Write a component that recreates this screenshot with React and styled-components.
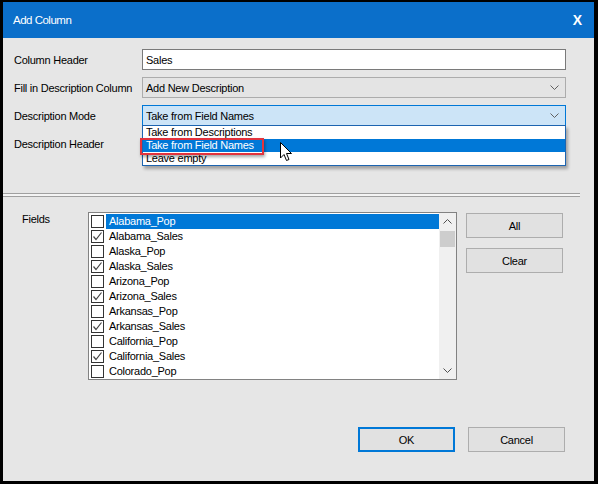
import React from 'react';
import styled, { createGlobalStyle } from 'styled-components';

const FONT = `"Liberation Sans", Arial, sans-serif`;

const Global = createGlobalStyle`
  html, body { margin: 0; padding: 0; background: #000; }
  * { box-sizing: border-box; }
`;

const Frame = styled.div`
  width: 598px;
  height: 484px;
  background: #000;
  padding: 2px 4px 3px 3px;
  font-family: ${FONT};
  font-size: 11px;
  letter-spacing: -0.25px;
  color: #000;
  white-space: nowrap;
`;

const Window = styled.div`
  height: 100%;
  background: #e6e6e6;
  display: flex;
  flex-direction: column;
`;

const TitleBar = styled.div`
  height: 36px;
  flex: none;
  background: #0b6fca;
  color: #fff;
  display: flex;
  align-items: center;
  justify-content: space-between;
  padding: 0 12px 0 10px;
  font-size: 11.5px;
  letter-spacing: -0.5px;
`;

const CloseX = styled.span`
  font-weight: bold;
  font-size: 14px;
  letter-spacing: 0;
`;

const Form = styled.div`
  display: grid;
  grid-template-columns: 128px 424px;
  grid-auto-rows: 21px;
  row-gap: 7px;
  padding: 11px 0 0 11px;
`;

const Label = styled.div`
  display: flex;
  align-items: center;
  padding-top: 1px;
`;

const TextBox = styled.div`
  background: #fff;
  border: 1px solid #7a7a7a;
  display: flex;
  align-items: center;
  padding-left: 3px;
`;

const Combo = styled.div`
  position: relative;
  height: 100%;
  background: ${(p) => (p.$focused ? '#cce4f7' : '#e4e4e4')};
  border: 1px solid ${(p) => (p.$focused ? '#0078d7' : '#acacac')};
  display: flex;
  align-items: center;
  justify-content: space-between;
  padding: 0 6px 0 3px;
`;

const Cell = styled.div`
  position: relative;
`;

const DropList = styled.div`
  position: absolute;
  top: 20px;
  left: 0;
  width: 424px;
  background: #fff;
  border: 1px solid #1c64b0;
  box-shadow: 2px 3px 3px rgba(0, 0, 0, 0.3);
  z-index: 5;
`;

const DropItem = styled.div`
  height: 13px;
  line-height: 13px;
  padding-left: 3px;
  background: ${(p) => (p.$selected ? '#0078d7' : '#fff')};
  color: ${(p) => (p.$selected ? '#fff' : '#000')};
`;

const Highlight = styled.div`
  position: absolute;
  left: -3px;
  top: 12px;
  width: 124px;
  height: 17px;
  border: 2px solid #e2333d;
  box-shadow: 1px 2px 3px rgba(0, 0, 0, 0.35);
`;

const Cursor = styled.svg`
  position: absolute;
  left: 137px;
  top: 16px;
`;

const Separator = styled.div`
  margin: 39px 14px 0 0;
  height: 4px;
  border-top: 1px solid #a0a0a0;
  border-bottom: 1px solid #a0a0a0;
  background: #f4f4f4;
`;

const FieldsSection = styled.div`
  display: flex;
  margin-top: 15px;
  padding-left: 19px;
`;

const FieldsLabel = styled.div`
  width: 66px;
  padding-top: 1px;
`;

const ListBox = styled.div`
  width: 369px;
  height: 168px;
  background: #fff;
  border: 1px solid #828282;
  display: flex;
`;

const Items = styled.div`
  flex: 1;
  padding-top: 1px;
`;

const Item = styled.div`
  height: 15px;
  display: flex;
  align-items: center;
`;

const Check = styled.div`
  width: 13px;
  height: 13px;
  margin-left: 2px;
  border: 1px solid #333;
  background: #fff;
  display: flex;
  align-items: center;
  justify-content: center;
`;

const ItemText = styled.div`
  flex: 1;
  margin-left: 2px;
  height: 15px;
  line-height: 15px;
  padding-left: 3px;
  background: ${(p) => (p.$selected ? '#0078d7' : 'transparent')};
  color: ${(p) => (p.$selected ? '#fff' : '#000')};
`;

const ScrollBar = styled.div`
  width: 17px;
  background: #f0f0f0;
  display: flex;
  flex-direction: column;
  align-items: center;
`;

const Arrow = styled.div`
  height: 17px;
  width: 17px;
  display: flex;
  align-items: center;
  justify-content: center;
`;

const Thumb = styled.div`
  width: 15px;
  height: 16px;
  margin-top: 1px;
  background: #cdcdcd;
`;

const Spacer = styled.div`
  flex: 1;
`;

const ButtonCol = styled.div`
  display: flex;
  flex-direction: column;
  gap: 10px;
  margin-left: 9px;
  padding-top: 1px;
`;

const Button = styled.div`
  width: 97px;
  height: 25px;
  background: #e1e1e1;
  border: ${(p) => (p.$default ? '2px solid #0078d7' : '1px solid #adadad')};
  display: flex;
  align-items: center;
  justify-content: center;
`;

const Footer = styled.div`
  margin-top: auto;
  display: flex;
  justify-content: flex-end;
  gap: 13px;
  padding: 0 29px 29px 0;
`;

const Chevron = ({ up = false, color = '#606060' }) => (
  <svg width="9" height="5" viewBox="0 0 9 5">
    <polyline
      points={up ? '0.5,4.5 4.5,0.5 8.5,4.5' : '0.5,0.5 4.5,4.5 8.5,0.5'}
      fill="none"
      stroke={color}
      strokeWidth="1"
    />
  </svg>
);

const Tick = () => (
  <svg width="11" height="11" viewBox="0 0 11 11">
    <polyline points="1.5,5.5 4,8.5 9.5,1.5" fill="none" stroke="#444" strokeWidth="1.2" />
  </svg>
);

const fields = [
  ['Alabama_Pop', false],
  ['Alabama_Sales', true],
  ['Alaska_Pop', false],
  ['Alaska_Sales', true],
  ['Arizona_Pop', false],
  ['Arizona_Sales', true],
  ['Arkansas_Pop', false],
  ['Arkansas_Sales', true],
  ['California_Pop', false],
  ['California_Sales', true],
  ['Colorado_Pop', false],
];

export default function App() {
  return (
    <>
      <Global />
      <Frame>
        <Window>
          <TitleBar>
            <span>Add Column</span>
            <CloseX>X</CloseX>
          </TitleBar>
          <Form>
            <Label>Column Header</Label>
            <TextBox>Sales</TextBox>
            <Label>Fill in Description Column</Label>
            <Combo>
              <span>Add New Description</span>
              <Chevron />
            </Combo>
            <Label>Description Mode</Label>
            <Cell>
              <Combo $focused>
                <span>Take from Field Names</span>
                <Chevron />
              </Combo>
              <DropList>
                <DropItem>Take from Descriptions</DropItem>
                <DropItem $selected>Take from Field Names</DropItem>
                <DropItem>Leave empty</DropItem>
                <Highlight />
                <Cursor width="13" height="20" viewBox="0 0 13 20">
                  <path
                    d="M0.5,0.5 L0.5,16 L4,12.5 L6.5,18.5 L9,17.5 L6.5,11.5 L11.5,11.5 Z"
                    fill="#fff"
                    stroke="#000"
                    strokeWidth="1"
                  />
                </Cursor>
              </DropList>
            </Cell>
            <Label>Description Header</Label>
            <TextBox />
          </Form>
          <Separator />
          <FieldsSection>
            <FieldsLabel>Fields</FieldsLabel>
            <ListBox>
              <Items>
                {fields.map(([name, checked], i) => (
                  <Item key={name}>
                    <Check>{checked && <Tick />}</Check>
                    <ItemText $selected={i === 0}>{name}</ItemText>
                  </Item>
                ))}
              </Items>
              <ScrollBar>
                <Arrow>
                  <Chevron up color="#505050" />
                </Arrow>
                <Thumb />
                <Spacer />
                <Arrow>
                  <Chevron color="#505050" />
                </Arrow>
              </ScrollBar>
            </ListBox>
            <ButtonCol>
              <Button>All</Button>
              <Button>Clear</Button>
            </ButtonCol>
          </FieldsSection>
          <Footer>
            <Button $default>OK</Button>
            <Button>Cancel</Button>
          </Footer>
        </Window>
      </Frame>
    </>
  );
}
